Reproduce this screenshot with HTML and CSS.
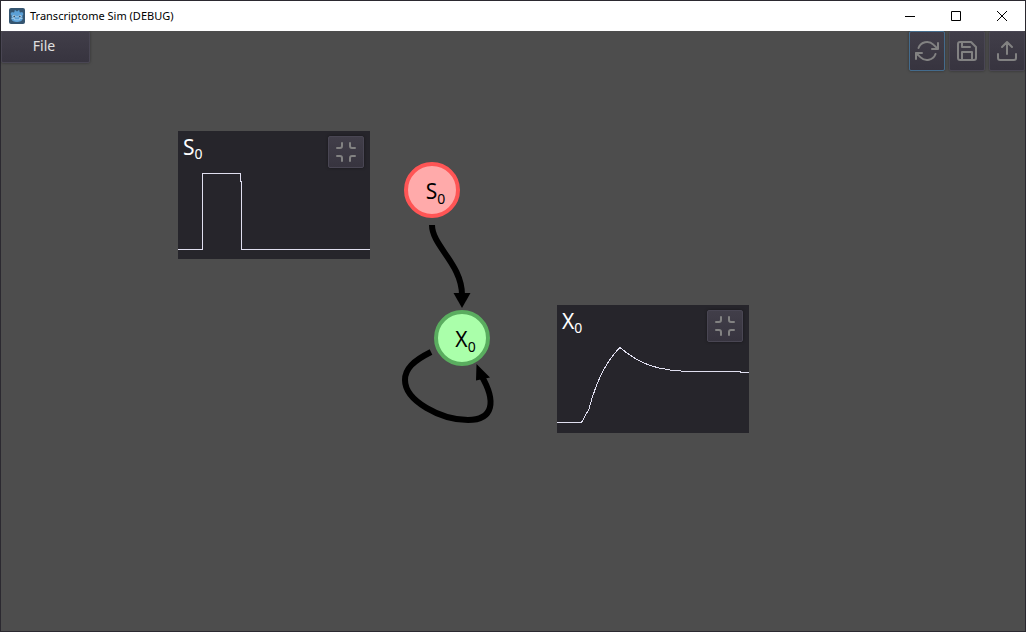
FILE: index.html
```html
<!DOCTYPE html>
<html lang="en">
<head>
<meta charset="utf-8">
<title>Transcriptome Sim (DEBUG)</title>
<link rel="stylesheet" href="styles.css">
</head>
<body>
<div class="window">
  <header class="titlebar">
    <svg class="app-icon" viewBox="0 0 16 16" aria-hidden="true">
      <rect width="16" height="16" rx="2" fill="#355570"/>
      <path d="M1.500 6l1.300-2 1.700.6 1-.6-.1-1.400 1.400-.4.6 1h1.200l.6-1 1.400.4-.1 1.400 1 .6 1.700-.6L14.500 6l-1 1.500V11c0 2-2.700 3-5.500 3s-5.500-1-5.500-3V7.500z" fill="#5ba0d6"/>
      <path d="M2.500 10.500H5.500v1.300h5v-1.300h3" fill="none" stroke="#a9cfec" stroke-width=".8"/>
      <circle cx="5" cy="8.300" r="1.500" fill="#b9d8ef"/><circle cx="11" cy="8.300" r="1.500" fill="#b9d8ef"/>
      <circle cx="5.200" cy="8.400" r=".9" fill="#355570"/><circle cx="10.800" cy="8.400" r=".9" fill="#355570"/>
      <path d="M8 8v1.500" stroke="#b9d8ef"/>
    </svg>
    <h1 class="title">Transcriptome Sim (DEBUG)</h1>
    <div class="window-controls">
      <button class="window-button" aria-label="Minimize"><svg viewBox="0 0 10 10"><path d="M0 5.500h10"/></svg></button>
      <button class="window-button" aria-label="Maximize"><svg viewBox="0 0 10 10"><path d="M.5.5h9v9h-9z"/></svg></button>
      <button class="window-button" aria-label="Close"><svg viewBox="0 0 10 10"><path d="M0 0l10 10M10 0L0 10"/></svg></button>
    </div>
  </header>
  <main class="stage">
    <div class="toolbar">
      <button class="button menu-button">File</button>
      <div class="actions">
        <button class="button tool-button focused" aria-label="Refresh"><svg class="icon" viewBox="0 0 24 24"><path d="M23 4v6h-6M1 20v-6h6M3.510 9a9 9 0 0 1 14.850-3.360L23 10M1 14l4.640 4.360A9 9 0 0 0 20.490 15"/></svg></button>
        <button class="button tool-button" aria-label="Save"><svg class="icon" viewBox="0 0 24 24"><path d="M19 21H5a2 2 0 0 1-2-2V5a2 2 0 0 1 2-2h11l5 5v11a2 2 0 0 1-2 2zM17 21v-8H7v8M7 3v5h8"/></svg></button>
        <button class="button tool-button" aria-label="Export"><svg class="icon" viewBox="0 0 24 24"><path d="M21 15v4a2 2 0 0 1-2 2H5a2 2 0 0 1-2-2v-4M17 8l-5-5-5 5M12 3v12"/></svg></button>
      </div>
    </div>

    <svg class="edges" aria-hidden="true">
      <g transform="translate(-1 -31)">
        <path class="edge" d="M432 225C432 246 462 264 462 295"/>
        <path d="M453.500 293h17L462 308z"/>
        <path class="edge" d="M431 352C413 361 405 369 405 380C405 401 441 420 468 420C493 420 497 402 481 375"/>
        <path d="M476.500 364L490 377.500L476 380.500z"/>
      </g>
    </svg>

    <div class="node node-signal"><span class="label">S<sub>0</sub></span></div>
    <div class="node node-gene"><span class="label">X<sub>0</sub></span></div>

    <section class="plot plot-signal">
      <div class="plot-head">
        <h2 class="label">S<sub>0</sub></h2>
        <button class="button shrink-button" aria-label="Shrink S0 plot"><svg class="icon" viewBox="0 0 24 24"><path d="M8 3v3a2 2 0 0 1-2 2H3M21 8h-3a2 2 0 0 1-2-2V3M3 16h3a2 2 0 0 1 2 2v3M16 21v-3a2 2 0 0 1 2-2h3"/></svg></button>
      </div>
      <svg class="curve" viewBox="0 0 192 128" aria-hidden="true"><path d="M0 118.500H24.500V42.500H62.500V50H63.500V118.500H192"/></svg>
    </section>

    <section class="plot plot-gene">
      <div class="plot-head">
        <h2 class="label">X<sub>0</sub></h2>
        <button class="button shrink-button" aria-label="Shrink X0 plot"><svg class="icon" viewBox="0 0 24 24"><path d="M8 3v3a2 2 0 0 1-2 2H3M21 8h-3a2 2 0 0 1-2-2V3M3 16h3a2 2 0 0 1 2 2v3M16 21v-3a2 2 0 0 1 2-2h3"/></svg></button>
      </div>
      <svg class="curve" viewBox="0 0 192 128" aria-hidden="true"><path d="M0 117.500H24.500L32 104C38 81 47 58 63 42.500C81 58 99 66.500 138 66.500H183V67.500H192"/></svg>
    </section>
  </main>
</div>
</body>
</html>
```
FILE: styles.css
```css
* { box-sizing: border-box; }

body {
  margin: 0;
  font-family: "Noto Sans", sans-serif;
}

.window {
  display: flex;
  flex-direction: column;
  min-height: 100vh;
  border: 1px solid #2b2930;
  background: #4d4d4d;
}

.titlebar {
  position: relative;
  z-index: 1;
  display: flex;
  align-items: center;
  height: 30px;
  padding-left: 8px;
  background: #fff;
}

.app-icon {
  width: 16px;
  height: 16px;
  margin-right: 5px;
}

.title {
  margin: 0;
  font: 400 11px/16px "Noto Sans", sans-serif;
  color: #000;
}

.window-controls {
  display: flex;
  margin-left: auto;
}

.window-button {
  display: flex;
  align-items: center;
  justify-content: center;
  width: 46px;
  height: 30px;
  padding: 0;
  border: 0;
  background: none;
}

.window-button svg {
  width: 10px;
  height: 10px;
  fill: none;
  stroke: #000;
}

.stage {
  position: relative;
  flex: 1;
}

.toolbar {
  display: flex;
  align-items: flex-start;
  justify-content: space-between;
}

.actions {
  display: flex;
  gap: 4px;
}

.button {
  display: flex;
  align-items: center;
  justify-content: center;
  padding: 0;
  border: 1px solid #494653;
  border-radius: 2px;
  background: linear-gradient(#413e49, #37343f);
  box-shadow: 0 0 3px rgba(0, 0, 0, 0.4);
  color: #e0e0e0;
}

.menu-button {
  width: 89px;
  height: 32px;
  padding-right: 3px;
  padding-bottom: 2px;
  font: 400 14px/20px "Noto Sans", sans-serif;
}

.tool-button {
  width: 36px;
  height: 40px;
}

.focused { border-color: #446b8c; }

.icon {
  width: 24px;
  height: 24px;
  flex: none;
  fill: none;
  stroke: #828282;
  stroke-width: 2;
  stroke-linecap: round;
  stroke-linejoin: round;
}

.label {
  margin: 0;
  font: 400 21px/28px "Noto Sans", sans-serif;
}

.label sub {
  position: relative;
  top: 5px;
  font-size: 14px;
  line-height: 1;
  vertical-align: baseline;
}

.edges {
  position: absolute;
  inset: 0;
  width: 100%;
  height: 100%;
  pointer-events: none;
}

.edge {
  fill: none;
  stroke: #000;
  stroke-width: 6;
}

.node {
  position: absolute;
  display: flex;
  align-items: center;
  justify-content: center;
  width: 56px;
  height: 56px;
  padding-top: 2px;
  padding-left: 7px;
  border: 4px solid;
  border-radius: 50%;
  color: #000;
}

.node-signal {
  left: 403px;
  top: 131px;
  border-color: #ff5555;
  background: #ffaaaa;
}

.node-gene {
  left: 433px;
  top: 279px;
  border-color: #5aad5f;
  background: #aaffaa;
}

.plot {
  position: absolute;
  width: 192px;
  height: 128px;
  background: #26252b;
  color: #fff;
}

.plot-signal { left: 177px; top: 100px; }
.plot-gene { left: 556px; top: 274px; }

.plot-head {
  display: flex;
  align-items: flex-start;
  justify-content: space-between;
  padding: 5px 6px 0 5px;
}

.plot-head .label { line-height: 22px; }

.plot-head sub { top: 4px; }

.shrink-button {
  width: 36px;
  height: 32px;
}

.curve {
  position: absolute;
  inset: 0;
  fill: none;
  stroke: #e0dff0;
  shape-rendering: crispEdges;
  pointer-events: none;
}
```
